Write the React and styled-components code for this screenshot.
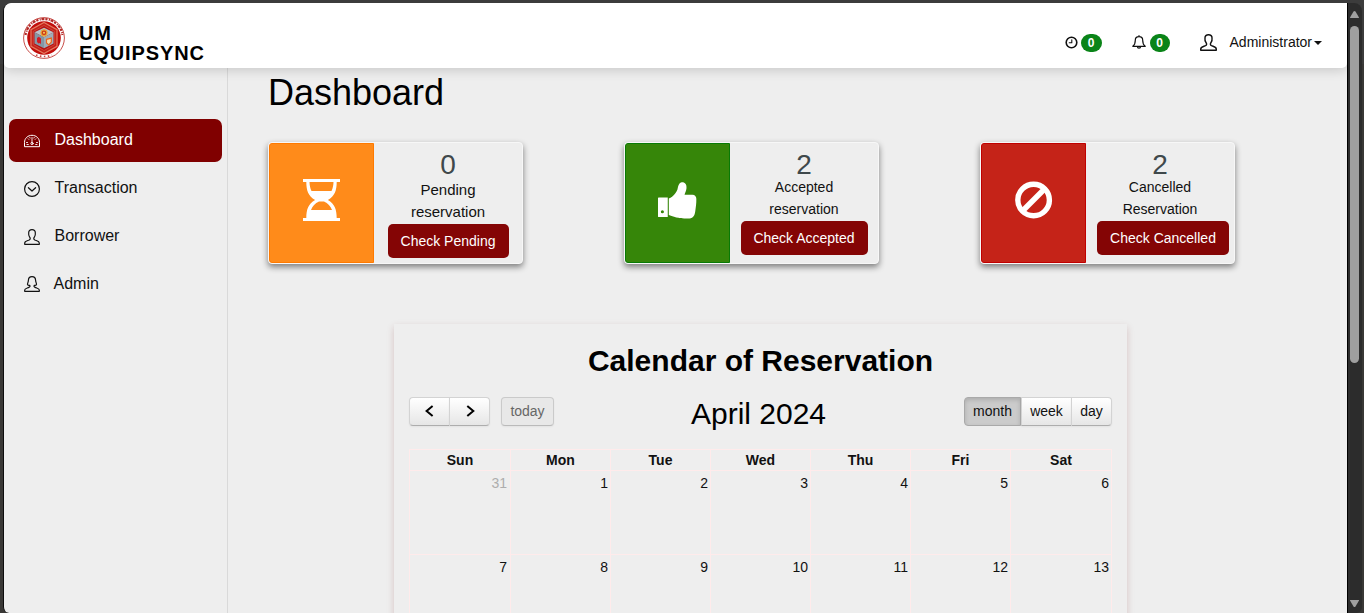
import React from "react";
import styled, { createGlobalStyle, css } from "styled-components";

const GlobalStyle = createGlobalStyle`
  * { box-sizing: border-box; }
  body {
    margin: 0;
    overflow: hidden;
    background: #393836;
    color: #111;
    font: 14px/20px "Liberation Sans", Arial, sans-serif;
  }
  h1, h2, h3, p { margin: 0; }
  button { font: inherit; }
  svg { display: block; flex: none; }
`;

/* ---------- window frame ---------- */
const Frame = styled.div`
  display: flex;
  height: 613px;
  padding: 3px 2px 0 3px;
  background: linear-gradient(#3c3c3c 0 64px, #393836 64px);
`;
const Viewport = styled.div`
  flex: 1;
  min-width: 0;
  height: 610px;
  overflow: hidden;
  display: flex;
  flex-direction: column;
  background: #eee;
  border-left: 1px solid #0c0c0c;
  border-radius: 8px 0 0 6px;
`;
const Scrollbar = styled.div`
  width: 15px;
  height: 610px;
  display: flex;
  flex-direction: column;
  align-items: center;
  background: #2c2c2c;
  border-left: 1px solid #000;
  border-radius: 0 8px 6px 0;
  padding: 8px 1px 6px 0;
`;
const Thumb = styled.div`
  width: 9px;
  height: 337px;
  margin-top: 8px;
  margin-bottom: auto;
  border-radius: 5px;
  background: #9f9f9f;
`;

/* ---------- header ---------- */
const Header = styled.header`
  position: relative;
  z-index: 1;
  flex: none;
  height: 65px;
  display: flex;
  justify-content: space-between;
  background: #fff;
  border-radius: 8px 0 5px 5px;
  box-shadow: 0 2px 12px rgba(0, 0, 0, 0.17);
`;
const Brand = styled.div`
  display: flex;
  padding: 14px 0 0 19px;
  gap: 14px;
`;
const BrandName = styled.div`
  padding-top: 6px;
  font-size: 20px;
  line-height: 20px;
  font-weight: bold;
  letter-spacing: 0.9px;
  color: #000;
`;
const HeaderTools = styled.div`
  display: flex;
  align-items: center;
  height: 20px;
  margin-top: 29px;
  padding-right: 25px;
`;
const Tool = styled.div`
  display: flex;
  align-items: center;
  gap: ${(p) => p.$gap}px;
  margin-right: ${(p) => p.$after || 0}px;
`;
const Badge = styled.span`
  width: ${(p) => p.$w}px;
  height: 18px;
  border-radius: 9px;
  margin-top: 2px;
  background: #0a8418;
  color: #fff;
  font-size: 12px;
  line-height: 18px;
  font-weight: bold;
  text-align: center;
`;
const Caret = styled.span`
  border: 4px solid transparent;
  border-top-color: #111;
  border-bottom: 0;
  margin-top: 1px;
`;

/* ---------- sidebar ---------- */
const Body = styled.div`
  flex: 1;
  display: flex;
  min-height: 0;
`;
const Sidebar = styled.nav`
  flex: none;
  width: 224px;
  border-right: 1px solid #d9d9d9;
  padding: 51px 5px 0;
  display: flex;
  flex-direction: column;
  gap: 5px;
`;
const NavItem = styled.a`
  display: flex;
  height: 43px;
  padding: 0 0 0 15px;
  gap: ${(p) => p.$gap || 14.5}px;
  border-radius: 7px;
  color: #111;
  font-size: 16px;
  line-height: 41px;
  svg { margin-top: ${(p) => p.$drop || 13}px; }
  ${(p) => p.$active && css`
    background: #800000;
    color: #fff;
  `}
`;

/* ---------- main ---------- */
const Main = styled.main`
  flex: 1;
  min-width: 0;
  padding: 5px 0 0 40px;
`;
const PageTitle = styled.h1`
  font-size: 36px;
  line-height: 40px;
  font-weight: normal;
  color: #000;
`;
const Cards = styled.div`
  display: flex;
  gap: 101px;
  margin-top: 29px;
`;
const Card = styled.section`
  display: flex;
  width: 255px;
  height: 122px;
  background: #eee;
  border: 1px solid #f7f7f7;
  border-radius: 4px;
  box-shadow: 0 3px 6px rgba(0, 0, 0, 0.48);
`;
const CardTile = styled.div`
  flex: none;
  width: 105px;
  display: flex;
  align-items: center;
  justify-content: center;
  padding-bottom: 6px;
  border: 1px solid ${(p) => p.$edge};
  border-radius: 3px 0 0 3px;
  background: ${(p) => p.$color};
`;
const CardInfo = styled.div`
  flex: 1;
  display: flex;
  flex-direction: column;
  align-items: center;
  text-align: center;
`;
const Count = styled.div`
  margin-top: 6px;
  height: ${(p) => (p.$large ? 30 : 27)}px;
  font-size: 28px;
  line-height: 32px;
  color: #3f484b;
`;
const CardLabel = styled.p`
  font-size: ${(p) => (p.$large ? 15 : 14)}px;
  line-height: 22px;
`;
const CardButton = styled.button`
  height: 34px;
  margin-top: 1px;
  margin-left: ${(p) => p.$shift || 0}px;
  width: ${(p) => p.$w}px;
  padding: 0;
  border: 0;
  border-radius: 5px;
  background: #840505;
  color: #fff;
  white-space: nowrap;
`;

/* ---------- calendar ---------- */
const Panel = styled.section`
  width: 733px;
  height: 420px;
  margin: 60px 0 0 126px;
  padding: 17px 15px 0;
  box-shadow: 0 3px 7px rgba(130, 50, 50, 0.22);
`;
const PanelTitle = styled.h2`
  font-size: 30px;
  line-height: 40px;
  text-align: center;
  color: #000;
`;
const Toolbar = styled.div`
  display: grid;
  grid-template-columns: 148px 1fr 148px;
  height: 29px;
  margin-top: 16px;
`;
const Group = styled.div`
  display: flex;
  justify-self: ${(p) => (p.$end ? "end" : "start")};
`;
const FcButton = styled.button`
  width: ${(p) => p.$w}px;
  height: 29px;
  margin-left: ${(p) => p.$before || 0}px;
  padding: 0 0 1px;
  display: flex;
  align-items: center;
  justify-content: center;
  border: 1px solid;
  border-color: #d3d3d3 #d3d3d3 #adadad;
  border-right-width: ${(p) => (p.$joined ? 0 : 1)}px;
  border-radius: ${(p) => p.$radius || "4px"};
  background: linear-gradient(#fff, #e6e6e6);
  box-shadow: 0 1px 2px rgba(0, 0, 0, 0.05);
  color: #111;
  ${(p) => p.$active && css`
    border-color: #a9a9a9;
    background: #cbcbcb;
    box-shadow: inset 0 2px 4px rgba(0, 0, 0, 0.15);
  `}
  ${(p) => p.$disabled && css`
    border-color: #cacaca #cacaca #bababa;
    background: #e8e8e8;
    color: #666;
  `}
`;
const Month = styled.h3`
  font-size: 30px;
  line-height: 34px;
  font-weight: normal;
  text-align: center;
  color: #000;
  padding-right: 4px;
`;
const Grid = styled.div`
  display: grid;
  grid-template-columns: 101px repeat(5, 100px) 101px;
  grid-template-rows: 21px 84px 84px;
  margin-top: 23px;
  border: solid #ffebeb;
  border-width: 1px 0 0 1px;
`;
const Cell = styled.div`
  border: solid #ffebeb;
  border-width: 0 1px 1px 0;
  padding: 2px 2px 0 0;
  text-align: right;
  color: ${(p) => (p.$muted ? "#adadad" : "#111")};
  &:nth-child(7n + 1) { padding-right: 3px; }
`;
const DayHead = styled.div`
  border: solid #ffebeb;
  border-width: 0 1px 1px 0;
  text-align: center;
  font-weight: bold;
`;

/* ---------- drawings ---------- */
const Seal = () => (
  <svg width="42" height="42" viewBox="0 0 42 42">
    <circle cx="21" cy="21" r="20.4" fill="#fff" stroke="#c23b36" strokeWidth=".9" />
    <path d="M2.5 18a18.7 18.7 0 0 1 37 0" fill="none" stroke="#b42a28" strokeWidth="2.2" strokeDasharray="2.2 1.3 1 .8 3 1" />
    <path d="M13 38q8 3 16 0" fill="none" stroke="#c64b46" strokeWidth="1.7" strokeDasharray="1.5 2.5" />
    <circle cx="21" cy="21" r="16.8" fill="#c10d0a" />
    <path d="M21 5.5l13 7.2v16.6l-13 7.2-13-7.2V12.700z" fill="#c52118" stroke="#e47a60" strokeWidth="1.2" />
    <path d="M21 8.500l10.700 6v13l-10.700 6-10.700-6v-13z" fill="#b51310" stroke="#d9584a" strokeWidth=".7" />
    <path d="M21 10.800l9.500 4.400-9.500 5-9.500-5z" fill="#b8c2cb" />
    <path d="M11.500 15.200l9.500 5v11l-9.500-4.700z" fill="#8397a5" />
    <path d="M30.500 15.200L21 20.200v11l9.500-4.700z" fill="#9fadb8" />
    <circle cx="21" cy="15.800" r="3" fill="#cf3a1b" stroke="#eba531" strokeWidth="1.200" />
    <circle cx="21" cy="15.800" r="1" fill="#f2d35e" />
    <path d="M14 21l1.800-1.300L18 21.500v6l-1-1.400-1.500.4-1.500-1.400z" fill="#d01c26" />
    <path d="M23.500 22.300l4.800-1.200v4L25.800 28l-2.300-2z" fill="#f4dfb2" stroke="#e9641f" strokeWidth="1.200" />
  </svg>
);

const line = { fill: "none", stroke: "currentColor", strokeLinecap: "round", strokeLinejoin: "round" };

const ClockIcon = () => (
  <svg width="13" height="13" viewBox="0 0 13 13" {...line}>
    <circle cx="6.500" cy="6.500" r="5.300" strokeWidth="1.600" />
    <path d="M6.800 3.800v3H4.200" strokeWidth="1.100" />
  </svg>
);
const BellIcon = () => (
  <svg width="14" height="14" viewBox="0 0 14 14" {...line} strokeWidth="1.200">
    <path d="M7 .7v.9M3.300 5.300C3.300 3 4.800 1.700 7 1.700s3.700 1.300 3.700 3.600c0 3.500.5 4.600 2.500 6H.8c2-1.400 2.500-2.500 2.500-6zM5.400 11.500a1.600 1.600 0 0 0 3.200 0" />
  </svg>
);
const UserIcon = ({ size = 16, weight = 1.2 }) => (
  <svg width={size} height={size} viewBox="0 0 16 16" {...line} strokeWidth={weight}>
    <path d="M8 .7C5.900.7 4.600 1.900 4.700 3.800c-.2 1.700 0 3 .8 4 .9 1.100 1.100 2.500-.3 3.200-2.100.9-4.500 1.200-4.500 3v1.300h14.600V14c0-1.800-2.400-2.100-4.500-3-1.400-.7-1.200-2.100-.3-3.200.8-1 1-2.300.8-4C11.400 1.900 10.100.7 8 .7z" />
  </svg>
);
const AdminIcon = () => (
  <svg width="16" height="16" viewBox="0 0 16 16" {...line} strokeWidth="1.200">
    <path d="M8 .7C5.600.7 4.500 2 4.400 4.200 4.300 6.200 3.600 6.800 3.500 8.300c.3 1 1.300 1.200 2.200 1.100.6 1 .3 1.500-.8 2C2.900 12.300.7 12.500.7 14v1.300h14.600V14c0-1.500-2.200-1.700-4.200-2.600-1.100-.5-1.400-1-.8-2 .9.100 1.900-.1 2.200-1.100-.1-1.500-.8-2.100-.9-4.100C11.500 2 10.400.7 8 .7z" />
  </svg>
);
const GaugeIcon = () => (
  <svg width="16" height="16" viewBox="0 0 16 16" {...line} strokeWidth="1">
    <path d="M.5 14.300v-3.800C.5 6.200 3.900 3.300 8 3.300s7.500 2.900 7.500 7.200v3.800z" />
    <path d="M8 5.500v5M4.200 6.800l.6.600M11.800 6.800l-.6.600M2.500 10.500h1M12.500 10.500h1M3 12.500h1.300M11.700 12.500H13M5.800 5.400l.3.600M10.200 5.400l-.3.600" strokeWidth=".9" />
    <circle cx="8" cy="11.500" r="1.100" />
  </svg>
);
const CircleDownIcon = () => (
  <svg width="16" height="16" viewBox="0 0 16 16" {...line} strokeWidth="1.200">
    <circle cx="8" cy="8" r="7.400" />
    <path d="M4.400 6.700L8 10l3.600-3.300" />
  </svg>
);
const HourglassIcon = () => (
  <svg width="40" height="42" viewBox="0 0 40 42" fill="#fff">
    <path d="M1 0h37v3h-3.300c0 8.500-2 14-8.800 18 6.800 4 8.800 9.500 8.800 18H38v3H1v-3h3.300c0-8.500 2-14 8.800-18-6.800-4-8.800-9.500-8.800-18H1zM7.500 3c.1 3.500.7 6.300 2 9h20c1.300-2.700 1.900-5.500 2-9zM17 22.500c-4 2-6.500 4.500-8 8.500h21c-1.500-4-4-6.500-8-8.500z" fillRule="evenodd" />
  </svg>
);
const ThumbIcon = () => (
  <svg width="40" height="37" viewBox="0.5 1 41 38" preserveAspectRatio="none" fill="#fff">
    <path d="M1.500 17h9v20h-9A1.500 1.500 0 0 1 0 35.500v-17A1.500 1.500 0 0 1 1.500 17zM5 30a1.600 1.600 0 1 0 0 3.200A1.600 1.600 0 0 0 5 30z" fillRule="evenodd" />
    <path d="M11.600 18c5-2.200 7.700-6 8.900-9.500C21.100 5.500 22 1.500 25 1.300c3.500-.1 5 2.700 4.700 6-.2 2.500-1.500 4.700-2 6.700h8.100c2.500 0 4 2 4 4.200.1 5-.6 9-1 12-.4 4.500-2 8-6 8.300-6.500.2-11.500.2-21.200-3.500z" />
  </svg>
);
const BanIcon = () => (
  <svg width="38" height="38" viewBox="0 0 38 38" fill="none" stroke="#fff" strokeWidth="5.400">
    <circle cx="18.600" cy="19" r="15.800" />
    <path d="M8 29.500l21-21" />
  </svg>
);
const Chevron = ({ right }) => (
  <svg width="12" height="12" viewBox="0 0 12 12" fill="none" stroke="#000" strokeWidth="2">
    <path d={right ? "M3.300 1l6 5-6 5" : "M8.600 1l-6 5 6 5"} />
  </svg>
);
const Arrow = ({ down }) => (
  <svg width="9" height="7" viewBox="0 0 9 7" fill="#9f9f9f">
    <path d={down ? "M0 .5C0 0 .3 0 .8 0h7.400c.5 0 .8 0 .8.500L5.500 6.400q-1 1-2 0z" : "M0 6.500C0 7 .3 7 .8 7h7.400c.5 0 .8 0 .8-.500L5.500.6q-1-1-2 0z"} />
  </svg>
);

/* ---------- content ---------- */
const cards = [
  { count: 0, label: ["Pending", "reservation"], action: "Check Pending", w: 121, color: "#ff8b1a", edge: "#ff7a00", icon: <HourglassIcon />, large: true },
  { count: 2, label: ["Accepted", "reservation"], action: "Check Accepted", w: 127, color: "#368609", edge: "#087a05", icon: <ThumbIcon /> },
  { count: 2, label: ["Cancelled", "Reservation"], action: "Check Cancelled", w: 132, shift: 6, color: "#c52318", edge: "#c00000", icon: <BanIcon /> },
];
const weekdays = ["Sun", "Mon", "Tue", "Wed", "Thu", "Fri", "Sat"];
const days = [31, 1, 2, 3, 4, 5, 6, 7, 8, 9, 10, 11, 12, 13];

export default function App() {
  return (
    <>
      <GlobalStyle />
      <Frame>
        <Viewport>
          <Header>
            <Brand>
              <Seal />
              <BrandName>UM<br />EQUIPSYNC</BrandName>
            </Brand>
            <HeaderTools>
              <Tool $gap={3} $after={30}><ClockIcon /><Badge $w={21}>0</Badge></Tool>
              <Tool $gap={4} $after={30}><BellIcon /><Badge $w={20}>0</Badge></Tool>
              <Tool $gap={13} $after={2}><UserIcon size={17} weight={1.35} /><span>Administrator</span></Tool>
              <Caret />
            </HeaderTools>
          </Header>
          <Body>
            <Sidebar>
              <NavItem $active><GaugeIcon />Dashboard</NavItem>
              <NavItem $drop={14}><CircleDownIcon />Transaction</NavItem>
              <NavItem $drop={14}><UserIcon />Borrower</NavItem>
              <NavItem $gap={13.5}><AdminIcon />Admin</NavItem>
            </Sidebar>
            <Main>
              <PageTitle>Dashboard</PageTitle>
              <Cards>
                {cards.map((c) => (
                  <Card key={c.action}>
                    <CardTile $color={c.color} $edge={c.edge}>{c.icon}</CardTile>
                    <CardInfo>
                      <Count $large={c.large}>{c.count}</Count>
                      <CardLabel $large={c.large}>{c.label[0]}<br />{c.label[1]}</CardLabel>
                      <CardButton $w={c.w} $shift={c.shift}>{c.action}</CardButton>
                    </CardInfo>
                  </Card>
                ))}
              </Cards>
              <Panel>
                <PanelTitle>Calendar of Reservation</PanelTitle>
                <Toolbar>
                  <Group>
                    <FcButton $w={40} $joined $radius="4px 0 0 4px"><Chevron /></FcButton>
                    <FcButton $w={41} $radius="0 4px 4px 0"><Chevron right /></FcButton>
                    <FcButton $w={53} $before={11} $disabled>today</FcButton>
                  </Group>
                  <Month>April 2024</Month>
                  <Group $end>
                    <FcButton $w={57} $active $radius="4px 0 0 4px">month</FcButton>
                    <FcButton $w={50} $joined $radius="0">week</FcButton>
                    <FcButton $w={41} $radius="0 4px 4px 0">day</FcButton>
                  </Group>
                </Toolbar>
                <Grid>
                  {weekdays.map((d) => <DayHead key={d}>{d}</DayHead>)}
                  {days.map((d) => <Cell key={d} $muted={d === 31}>{d}</Cell>)}
                </Grid>
              </Panel>
            </Main>
          </Body>
        </Viewport>
        <Scrollbar>
          <Arrow />
          <Thumb />
          <Arrow down />
        </Scrollbar>
      </Frame>
    </>
  );
}
